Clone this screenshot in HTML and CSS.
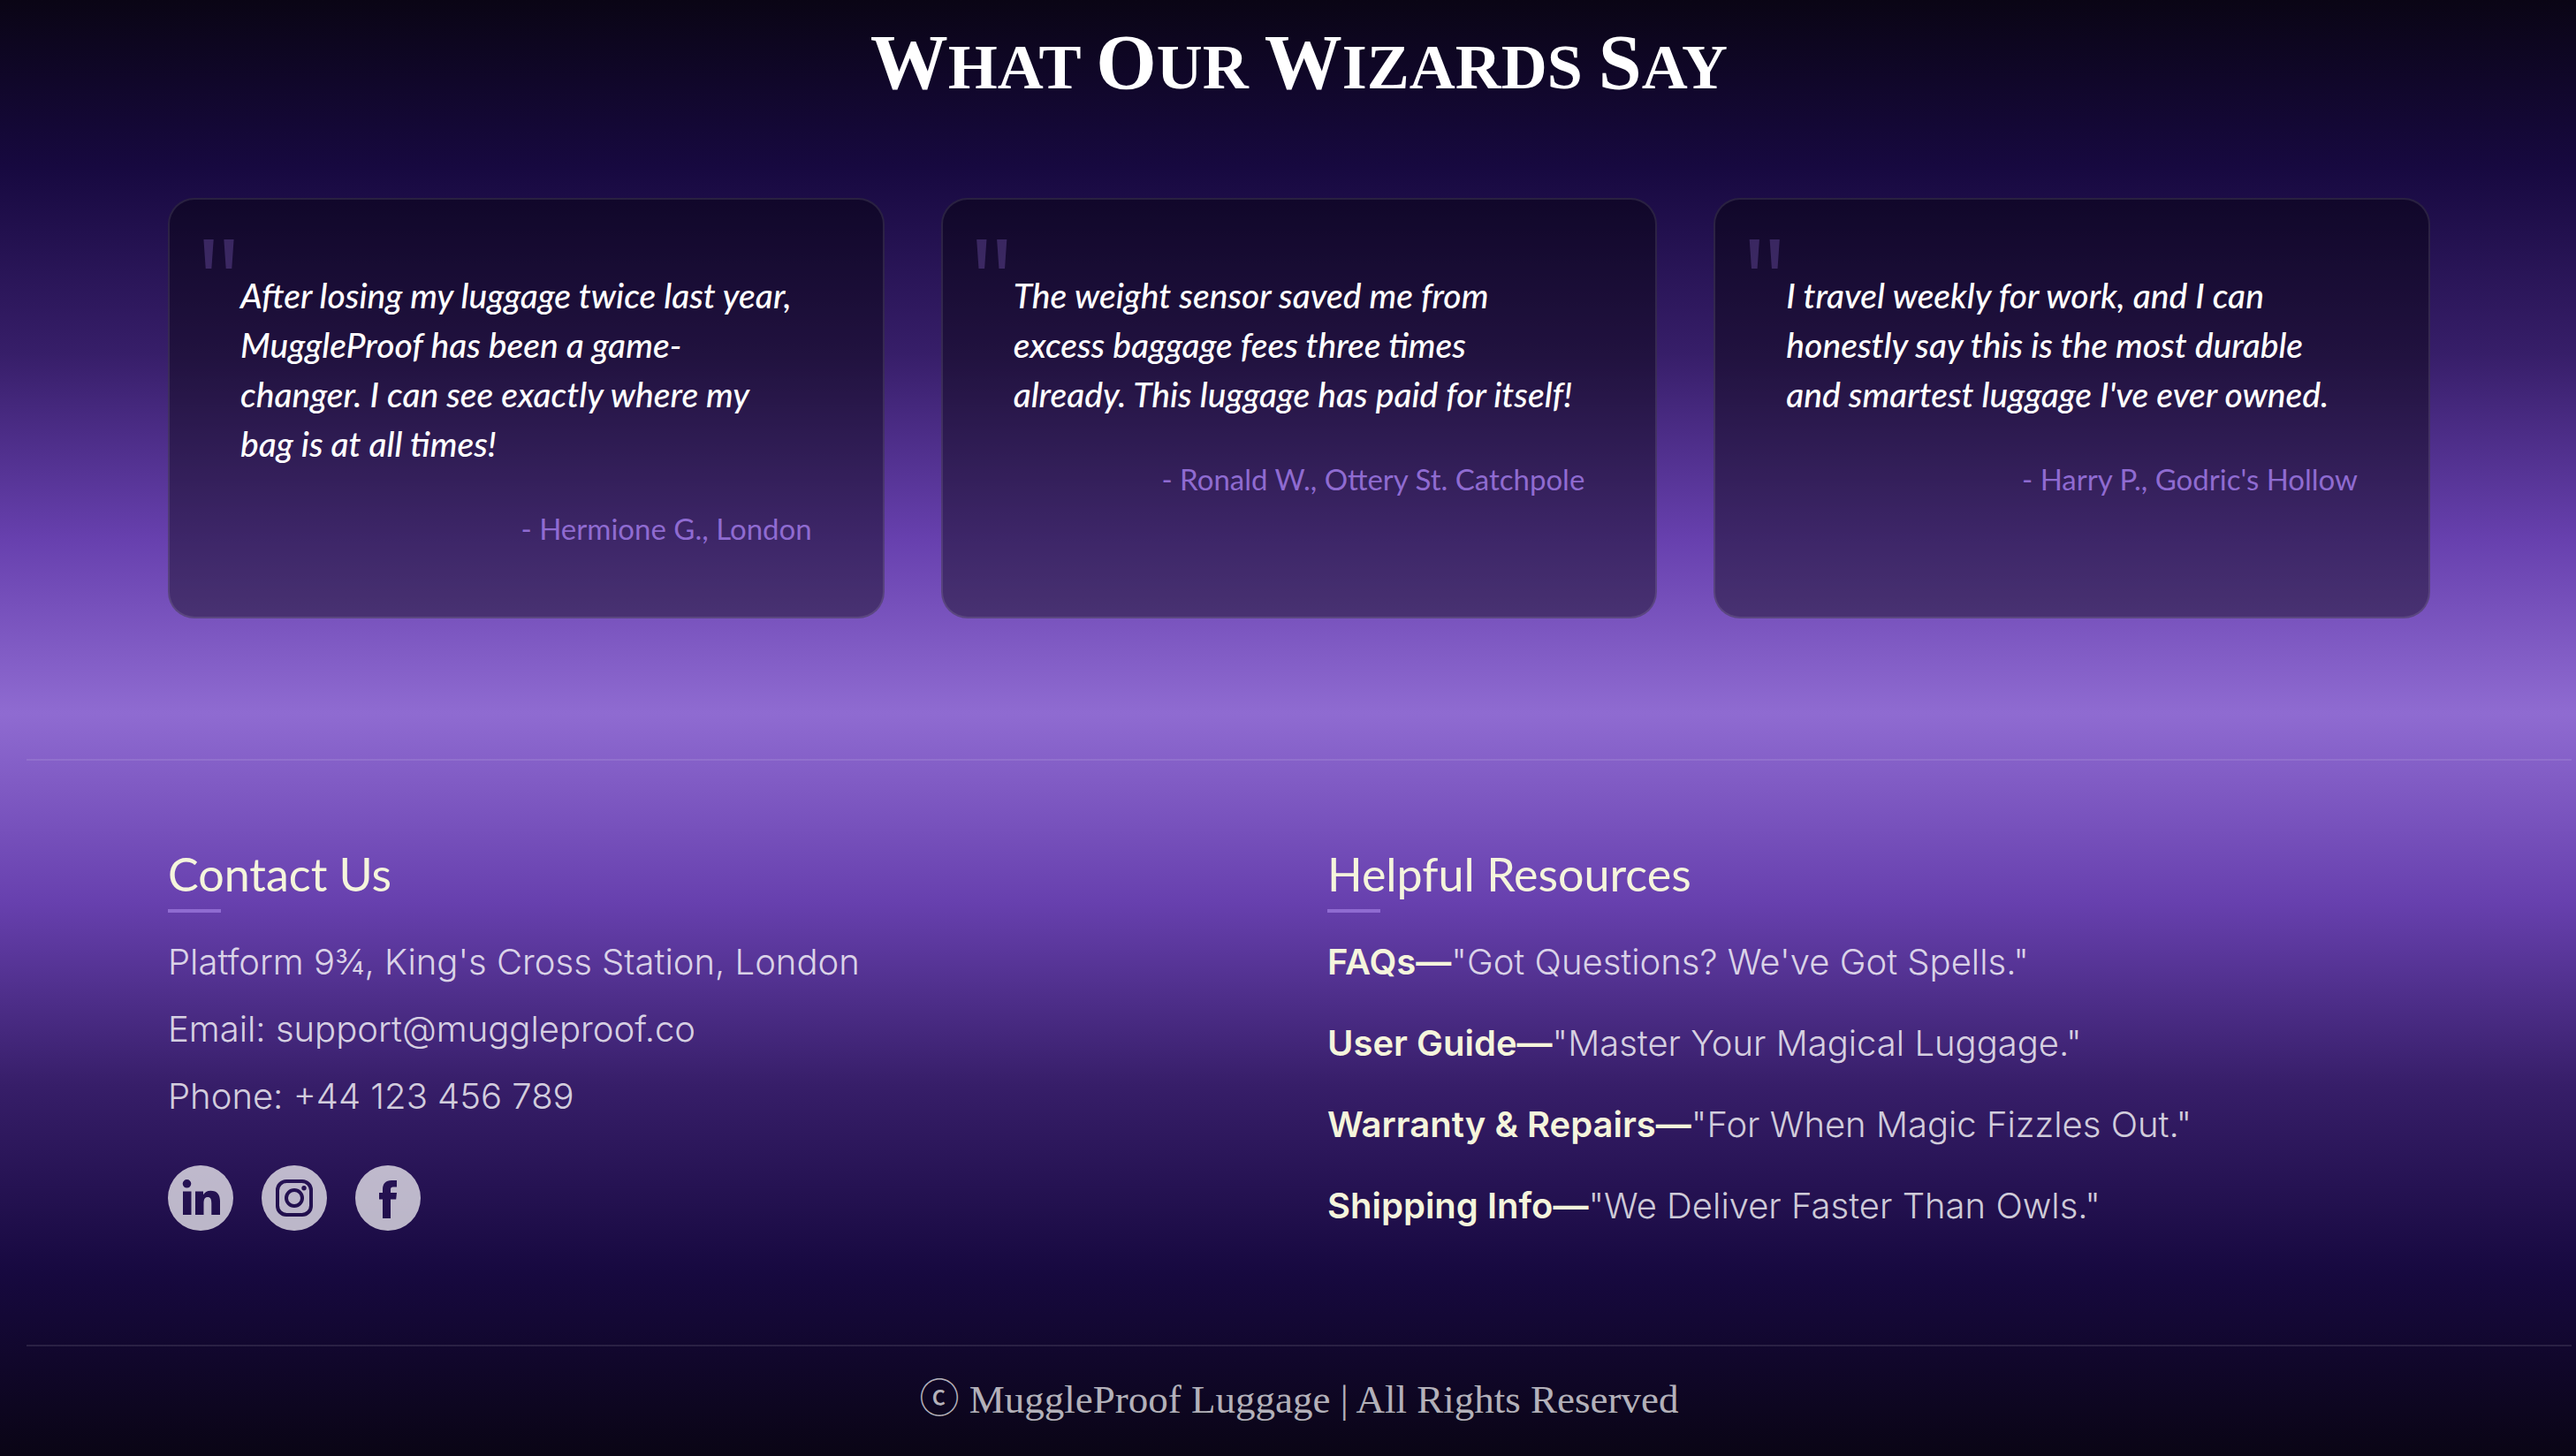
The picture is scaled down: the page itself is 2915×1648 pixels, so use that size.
FILE: index.html
```html
<!DOCTYPE html>
<html lang="en">
<head>
<meta charset="utf-8">
<title>MuggleProof Luggage</title>
<meta name="viewport" content="width=device-width, initial-scale=1">
<link rel="stylesheet" href="styles.css">
</head>
<body>
<main class="testimonials">
  <h2 class="section-title"><span class="initial">W</span>hat <span class="initial">O</span>ur <span class="initial">W</span>izards <span class="initial">S</span>ay</h2>
  <div class="cards">
    <figure class="card">
      <blockquote class="quote">After losing my luggage twice last year,<br>MuggleProof has been a game-<br>changer. I can see exactly where my<br>bag is at all times!</blockquote>
      <figcaption class="author">- Hermione G., London</figcaption>
    </figure>
    <figure class="card">
      <blockquote class="quote">The weight sensor saved me from<br>excess baggage fees three times<br>already. This luggage has paid for itself!</blockquote>
      <figcaption class="author">- Ronald W., Ottery St. Catchpole</figcaption>
    </figure>
    <figure class="card">
      <blockquote class="quote">I travel weekly for work, and I can<br>honestly say this is the most durable<br>and smartest luggage I've ever owned.</blockquote>
      <figcaption class="author">- Harry P., Godric's Hollow</figcaption>
    </figure>
  </div>
</main>
<footer class="footer">
  <div class="footer-columns">
    <section>
      <h3 class="footer-title">Contact Us</h3>
      <address class="contact">
        <p>Platform 9¾, King's Cross Station, London</p>
        <p>Email: support@muggleproof.co</p>
        <p>Phone: +44 123 456 789</p>
      </address>
      <div class="social">
        <a href="#linkedin" aria-label="LinkedIn"><svg viewBox="0 0 74 74"><path fill-rule="evenodd" d="M37 0a37 37 0 1 0 0 74a37 37 0 0 0 0-74zM21.500 16a4.800 4.800 0 1 1 0 9.600a4.800 4.800 0 0 1 0-9.600zM17 29.500h9.500V56H17zM31 29.500h9v3.700c1.600-2.700 4.400-4.500 8.300-4.500c7.600 0 10.700 4.700 10.700 12V56h-9.700V43c0-4.500-1-7-4.300-7c-3.200 0-4.500 2.500-4.500 7v13H31z"/></svg></a>
        <a href="#instagram" aria-label="Instagram"><svg viewBox="0 0 74 74"><path fill-rule="evenodd" d="M37 0a37 37 0 1 0 0 74a37 37 0 0 0 0-74zM28 16h18a12 12 0 0 1 12 12v18a12 12 0 0 1-12 12H28a12 12 0 0 1-12-12V28a12 12 0 0 1 12-12zM28.500 20a8.500 8.500 0 0 0-8.500 8.500v17a8.500 8.500 0 0 0 8.500 8.500h17a8.500 8.500 0 0 0 8.500-8.500v-17a8.500 8.500 0 0 0-8.500-8.500zM37 26a11 11 0 1 1 0 22a11 11 0 0 1 0-22zM37 30a7 7 0 1 0 0 14a7 7 0 0 0 0-14zM48 23a2.700 2.700 0 1 1 0 5.400a2.700 2.700 0 0 1 0-5.400z"/></svg></a>
        <a href="#facebook" aria-label="Facebook"><svg viewBox="0 0 74 74"><path fill-rule="evenodd" d="M37 0a37 37 0 1 0 0 74a37 37 0 0 0 0-74zM47 17v7.500h-4c-2.300 0-3 1-3 3V31h7l-.8 7.500H40V60h-9V38.500h-4V31h4v-3.500C31 20.500 34.500 17 41 17z"/></svg></a>
      </div>
    </section>
    <section>
      <h3 class="footer-title">Helpful Resources</h3>
      <ul class="resources">
        <li><a href="#faqs">FAQs—</a>"Got Questions? We've Got Spells."</li>
        <li><a href="#user-guide">User Guide—</a>"Master Your Magical Luggage."</li>
        <li><a href="#warranty">Warranty &amp; Repairs—</a>"For When Magic Fizzles Out."</li>
        <li><a href="#shipping">Shipping Info—</a>"We Deliver Faster Than Owls."</li>
      </ul>
    </section>
  </div>
  <p class="copyright">ⓒ MuggleProof Luggage | All Rights Reserved</p>
</footer>
</body>
</html>
```
FILE: styles.css
```css
* {
  box-sizing: border-box;
  margin: 0;
  padding: 0;
}

body {
  min-height: 100vh;
  padding: 0 5px 0 30px;
  color: #fff;
  font-family: Inter, "Liberation Sans", sans-serif;
  background: linear-gradient(
    180deg,
    #0a0515 0%,
    #170940 11.500%,
    #371e69 24.300%,
    #6740ae 37%,
    #8f6bd1 49%,
    #6740ae 62%,
    #371e69 74.500%,
    #170940 87.300%,
    #0a0515 100%
  );
}

.testimonials {
  padding: 20px 160px 159px;
}

.section-title {
  margin-bottom: 92px;
  font: bold 72px/112px "Liberation Serif", serif;
  text-align: center;
  text-transform: uppercase;
}

.initial {
  font-size: 88px;
  line-height: 1;
}

.cards {
  display: grid;
  grid-template-columns: repeat(3, 1fr);
  gap: 64px;
}

.card {
  position: relative;
  padding: 80px;
  border: 2px solid rgba(255, 255, 255, 0.1);
  border-radius: 30px;
  background: rgba(0, 0, 0, 0.4);
}

.card::before {
  content: '"';
  position: absolute;
  top: 8px;
  left: 30px;
  color: #8f6bd1;
  font: 128px/160px "Open Sans", sans-serif;
  opacity: 0.3;
}

.quote {
  position: relative;
  font: italic 500 39px/56px Lato, sans-serif;
}

.author {
  margin-top: 48px;
  color: #8f6bd1;
  font: 33px/40px Lato, sans-serif;
  text-align: right;
}

.footer {
  border-top: 2px solid rgba(255, 255, 255, 0.1);
}

.footer-columns {
  display: grid;
  grid-template-columns: 1fr 1fr;
  gap: 64px;
  padding: 96px 160px 127px;
}

.footer-title {
  position: relative;
  margin-bottom: 26px;
  padding-bottom: 12px;
  color: #f5f5dc;
  font: 52px/64px Lato, sans-serif;
}

.footer-title::after {
  content: "";
  position: absolute;
  bottom: 0;
  left: 0;
  width: 60px;
  height: 4px;
  background: #8f6bd1;
}

.contact,
.resources {
  display: grid;
  gap: 16px;
  color: rgba(255, 255, 255, 0.8);
  font: 300 40px/60px Inter, sans-serif;
  list-style: none;
}

.resources {
  gap: 32px;
}

.resources a {
  color: #f5f5dc;
  font-weight: 600;
  text-decoration: none;
}

.social {
  display: flex;
  gap: 32px;
  margin-top: 48px;
}

.social a {
  width: 74px;
  height: 74px;
}

.social svg {
  display: block;
  fill: rgba(255, 255, 255, 0.7);
}

.copyright {
  padding: 32px 0;
  border-top: 2px solid rgba(255, 255, 255, 0.1);
  color: rgba(255, 255, 255, 0.7);
  font: 45px/56px "Liberation Serif", "Noto Sans CJK JP", serif;
  text-align: center;
}
```
